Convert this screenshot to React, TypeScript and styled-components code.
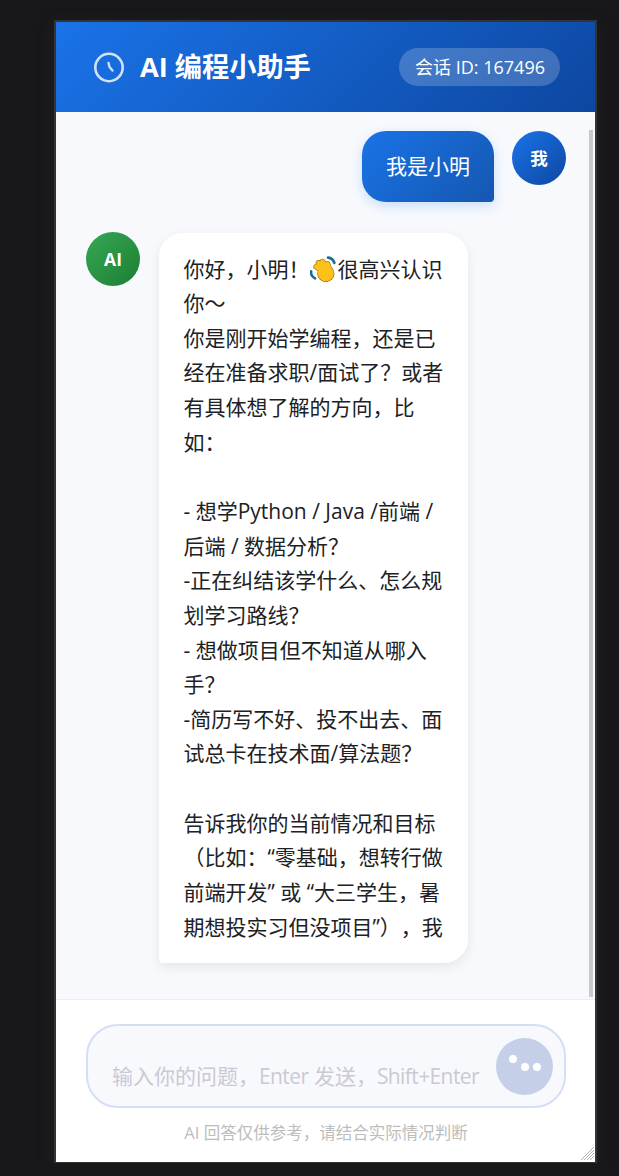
import React from "react";
import styled, { createGlobalStyle } from "styled-components";

const FONT_STACK = `"Open Sans", "Noto Sans CJK SC", sans-serif`;

const GlobalStyle = createGlobalStyle`
  html, body {
    margin: 0;
    padding: 0;
    background: #18181a;
    font-family: ${FONT_STACK};
  }
`;

// === Shell ===
const Shell = styled.div`
  position: relative;
  box-sizing: border-box;
  display: flex;
  flex-direction: column;
  width: 543px;
  height: 1143px;
  margin: 20px 0 0 54px;
  border: 2px solid #333438;
  border-bottom-width: 1px;
  background: #fff;
  overflow: hidden;
  box-shadow: 0 4px 16px rgba(60, 60, 60, 0.25);
`;

// === Header ===
const Header = styled.header`
  box-sizing: border-box;
  flex: 0 0 90px;
  display: flex;
  align-items: center;
  justify-content: space-between;
  padding: 0 35px 0 36.5px;
  color: #fff;
  background: linear-gradient(135deg, #1a73e8, #0d47a1);
`;

const Brand = styled.div`
  display: flex;
  align-items: center;
  gap: 15.5px;
`;

const Title = styled.h1`
  margin: 0;
  padding-top: 1px;
  font-size: 27.2px;
  font-weight: 700;
  line-height: 1.2;
`;

const SessionBadge = styled.div`
  padding: 6px 15px 6px 16px;
  border-radius: 20px;
  font-size: 18px;
  line-height: 26px;
  background: rgba(255, 255, 255, 0.2);
`;

// === Messages ===
const Messages = styled.main`
  position: relative;
  box-sizing: border-box;
  flex: 1;
  min-height: 0;
  display: flex;
  flex-direction: column;
  gap: 30px;
  padding: 19px 29px 36px 30px;
  background: #f7f9fd;
  border-bottom: 1px solid #eceef3;
`;

const ScrollThumb = styled.div`
  position: absolute;
  top: 18px;
  right: 2px;
  bottom: 2px;
  width: 4px;
  background: #c9c9c9;
`;

const Row = styled.div<{ $mine?: boolean }>`
  display: flex;
  align-items: flex-start;
  gap: ${(p) => (p.$mine ? "18px" : "19px")};
  justify-content: ${(p) => (p.$mine ? "flex-end" : "flex-start")};
`;

const Avatar = styled.div<{ $mine?: boolean }>`
  box-sizing: border-box;
  flex: 0 0 54px;
  height: 54px;
  display: flex;
  align-items: center;
  justify-content: center;
  padding-bottom: ${(p) => (p.$mine ? "2px" : "0")};
  border-radius: 50%;
  color: #fff;
  font-size: 17.5px;
  font-weight: 700;
  background: ${(p) =>
    p.$mine
      ? "linear-gradient(135deg, #1a73e8, #0d47a1)"
      : "linear-gradient(135deg, #34a853, #1e7e34)"};
`;

const UserBubble = styled.div`
  box-sizing: border-box;
  width: 132px;
  height: 71px;
  display: flex;
  align-items: center;
  justify-content: center;
  padding-bottom: 4px;
  border-radius: 24px 24px 4px 24px;
  color: #fff;
  font-size: 21px;
  background: linear-gradient(135deg, #1a73e8, #1557b0);
  box-shadow: 0 4px 12px rgba(26, 115, 232, 0.2);
`;

const BotBubble = styled.div`
  box-sizing: border-box;
  width: 309px;
  height: 730px;
  margin-top: 1px;
  padding: 18.5px 0 0 24.5px;
  border-radius: 24px 24px 24px 4px;
  overflow: hidden;
  color: #202124;
  font-size: 21px;
  line-height: 34.65px;
  text-spacing-trim: space-all;
  background: #fff;
  box-shadow: 0 4px 12px rgba(0, 0, 0, 0.08);
`;

const Line = styled.div`
  white-space: nowrap;
  height: 34.65px;
`;

const Wave = styled.svg`
  display: inline-block;
  width: 26px;
  height: 26px;
  margin: 0 2px 0 0;
  vertical-align: -5px;
`;

// === Composer ===
const Composer = styled.footer`
  box-sizing: border-box;
  flex: 0 0 162px;
  padding: 24px 29px 0 30px;
  background: #fff;
`;

const InputBox = styled.div`
  box-sizing: border-box;
  height: 84px;
  display: flex;
  align-items: center;
  justify-content: space-between;
  padding: 0 11px 0 24px;
  border: 2px solid #d4def5;
  border-radius: 32px;
  background: #f7f9fd;
`;

const Placeholder = styled.div`
  padding-top: 20px;
  color: #cbc9d4;
  font-size: 21px;
  line-height: 30px;
  white-space: nowrap;
`;

const Latin = styled.span`
  letter-spacing: -0.6px;
`;

const SendButton = styled.button`
  flex: 0 0 57px;
  height: 57px;
  padding: 0;
  border: 0;
  border-radius: 50%;
  background: #c5d0e8;
  display: flex;
  align-items: center;
  justify-content: center;
`;

const Disclaimer = styled.div`
  margin-top: 14px;
  text-align: center;
  color: #bdbdbd;
  font-size: 16.5px;
  line-height: 22px;
`;

const ResizeGrip = styled.svg`
  position: absolute;
  right: 1px;
  bottom: 2px;
  width: 13px;
  height: 13px;
`;

const botLines = [
  "你是刚开始学编程，还是已",
  "经在准备求职/面试了？或者",
  "有具体想了解的方向，比",
  "如：",
  "",
  "- 想学Python / Java /前端 /",
  "后端 / 数据分析？",
  "-正在纠结该学什么、怎么规",
  "划学习路线？",
  "- 想做项目但不知道从哪入",
  "手？",
  "-简历写不好、投不出去、面",
  "试总卡在技术面/算法题？",
  "",
  "告诉我你的当前情况和目标",
  "（比如：“零基础，想转行做",
  "前端开发” 或 “大三学生，暑",
  "期想投实习但没项目”），我",
];

export default function App() {
  return (
    <>
      <GlobalStyle />
      <Shell>
        <Header>
          <Brand>
            <svg width="32" height="32" viewBox="0 0 32 32" fill="none" stroke="#fff" opacity="0.8">
              <circle cx="16" cy="16.5" r="13.7" strokeWidth="2.6" />
              <path d="M15.5 12L16.5 16L19.5 19.5" strokeWidth="2.4" strokeLinecap="round" strokeLinejoin="round" />
            </svg>
            <Title>AI 编程小助手</Title>
          </Brand>
          <SessionBadge>会话 ID: 167496</SessionBadge>
        </Header>

        <Messages>
          <ScrollThumb />
          <Row $mine>
            <UserBubble>我是小明</UserBubble>
            <Avatar $mine>我</Avatar>
          </Row>
          <Row>
            <Avatar>AI</Avatar>
            <BotBubble>
              <Line>
                你好，小明！
                <Wave viewBox="1 1 23 23">
                  {/* motion marks */}
                  <path d="M17 2.5c2.5.3 4.6 2 5.5 4.5" fill="none" stroke="#1a6f8f" strokeWidth="2.4" strokeLinecap="round" />
                  <path d="M2 14.5c-.4 2.6.9 5 3.4 6.3" fill="none" stroke="#1a6f8f" strokeWidth="2.4" strokeLinecap="round" />
                  {/* fingers, outline then fill */}
                  <g fill="none" stroke="#9a6f0a" strokeWidth="5" strokeLinecap="round">
                    <path d="M13 15L6.5 10.5M14 13L8.5 7M16 12L12 6M18 13L16.5 8" />
                  </g>
                  <circle cx="15" cy="16.5" r="7.6" fill="#9a6f0a" />
                  <g fill="none" stroke="#fcc21b" strokeWidth="4" strokeLinecap="round">
                    <path d="M13 15L6.5 10.5M14 13L8.5 7M16 12L12 6M18 13L16.5 8" />
                  </g>
                  <circle cx="15" cy="16.5" r="7" fill="#fcc21b" />
                </Wave>
                很高兴认识
              </Line>
              <Line>你～</Line>
              {botLines.map((text, i) => (
                <Line key={i}>{text}</Line>
              ))}
            </BotBubble>
          </Row>
        </Messages>

        <Composer>
          <InputBox>
            <Placeholder>
              输入你的问题，<Latin>Enter</Latin> 发送，<Latin>Shift+Enter</Latin>
            </Placeholder>
            <SendButton aria-label="发送">
              <svg width="57" height="57" viewBox="0 0 57 57" fill="#fff">
                <circle cx="17" cy="21" r="4" />
                <circle cx="29" cy="29" r="4" />
                <circle cx="41" cy="29" r="4" />
              </svg>
            </SendButton>
          </InputBox>
          <Disclaimer>AI 回答仅供参考，请结合实际情况判断</Disclaimer>
        </Composer>

        <ResizeGrip viewBox="0 0 13 13" stroke="#9a9a9a" strokeWidth="0.8">
          <path d="M0 13L13 0M3 13L13 3M6 13L13 6M9 13L13 9" />
        </ResizeGrip>
      </Shell>
    </>
  );
}
